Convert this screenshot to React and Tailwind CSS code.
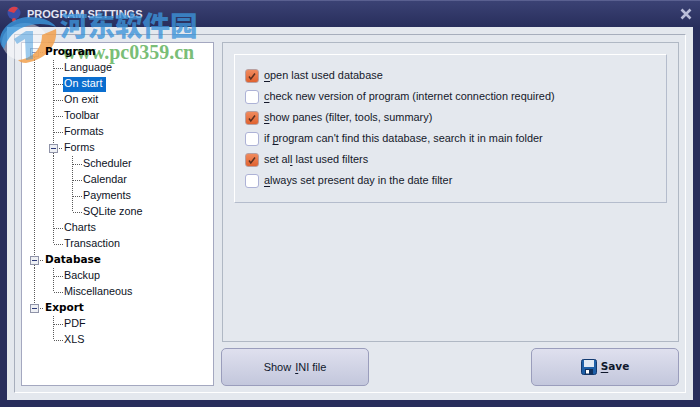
const uiFont = { fontFamily: '"Liberation Sans", "Noto Sans", sans-serif' };

function Cell({ kind }) {
  const dots = "#5a5a5a";
  return (
    <svg width="19" height="16" className="shrink-0" shapeRendering="crispEdges">
      {(kind === "v" || kind === "tee") && <line x1="9.5" y1="0" x2="9.5" y2="16" stroke={dots} strokeDasharray="1 1" />}
      {kind === "corner" && <line x1="9.5" y1="0" x2="9.5" y2="8" stroke={dots} strokeDasharray="1 1" />}
      {(kind === "tee" || kind === "corner") && <line x1="10" y1="8.5" x2="19" y2="8.5" stroke={dots} strokeDasharray="1 1" />}
      {kind === "boxDown" && <line x1="9.5" y1="13" x2="9.5" y2="16" stroke={dots} strokeDasharray="1 1" />}
      {kind === "boxBoth" && <><line x1="9.5" y1="0" x2="9.5" y2="4" stroke={dots} strokeDasharray="1 1" /><line x1="9.5" y1="13" x2="9.5" y2="16" stroke={dots} strokeDasharray="1 1" /></>}
      {kind === "boxUp" && <line x1="9.5" y1="0" x2="9.5" y2="4" stroke={dots} strokeDasharray="1 1" />}
      {kind.startsWith("box") && (
        <>
          <line x1="15" y1="8.5" x2="19" y2="8.5" stroke={dots} strokeDasharray="1 1" />
          <rect x="5.5" y="4.5" width="8" height="8" fill="#eef0f4" stroke="#8f93a8" />
          <line x1="7" y1="8.5" x2="12" y2="8.5" stroke="#2d3a78" />
        </>
      )}
    </svg>
  );
}

function TreeRow({ cells, label, bold, selected }) {
  return (
    <div className="flex h-4 items-center">
      {cells.map((c, i) => <Cell key={i} kind={c} />)}
      <span className={`relative z-10 h-[15px] whitespace-nowrap px-px leading-[12px] ${bold ? "font-bold text-black" : "text-[10.8px] text-[#0c1224]"} ${selected ? "bg-[#0a6ecf] pr-[4px] text-white" : ""}`} style={bold ? { fontFamily: '"DejaVu Sans", sans-serif', fontSize: 10.5 } : undefined}>
        {label}
      </span>
    </div>
  );
}

const rows = [
  { cells: ["boxDown"], label: "Program", bold: true },
  { cells: ["v", "tee"], label: "Language" },
  { cells: ["v", "tee"], label: "On start", selected: true },
  { cells: ["v", "tee"], label: "On exit" },
  { cells: ["v", "tee"], label: "Toolbar" },
  { cells: ["v", "tee"], label: "Formats" },
  { cells: ["v", "boxBoth"], label: "Forms" },
  { cells: ["v", "v", "tee"], label: "Scheduler" },
  { cells: ["v", "v", "tee"], label: "Calendar" },
  { cells: ["v", "v", "tee"], label: "Payments" },
  { cells: ["v", "v", "corner"], label: "SQLite zone" },
  { cells: ["v", "tee"], label: "Charts" },
  { cells: ["v", "corner"], label: "Transaction" },
  { cells: ["boxBoth"], label: "Database", bold: true },
  { cells: ["v", "tee"], label: "Backup" },
  { cells: ["v", "corner"], label: "Miscellaneous" },
  { cells: ["boxUp"], label: "Export", bold: true },
  { cells: ["blank", "tee"], label: "PDF" },
  { cells: ["blank", "corner"], label: "XLS" },
];

function Check({ checked, label }) {
  return (
    <div className="flex h-[21px] items-center gap-[5px]">
      <span className={`flex h-[14px] w-[14px] items-center justify-center rounded-[3px] border ${checked ? "border-[#b9a0a0] bg-gradient-to-b from-[#f08a5c] to-[#e0622f]" : "border-[#adb2d6] bg-white"}`}>
        {checked && (
          <svg width="10" height="10" viewBox="0 0 10 10">
            <path d="M2 5.5 L3.8 8 L8 2.5" fill="none" stroke="#5c3020" strokeWidth="1.5" />
          </svg>
        )}
      </span>
      <span className="whitespace-nowrap text-[10.9px] text-[#14182a]">{label}</span>
    </div>
  );
}

const U = ({ children }) => <span className="underline underline-offset-2">{children}</span>;

function Btn({ children }) {
  return (
    <button className="flex h-[38px] w-[148px] items-center justify-center rounded-[5px] border border-[#9a9dbc] bg-gradient-to-b from-[#dfe0ee] to-[#c3c7dc] text-[11px] text-[#10182c]">
      {children}
    </button>
  );
}

export default function App() {
  return (
    <div className="relative flex h-[407px] w-[700px] flex-col overflow-hidden bg-[#282e5c]" style={uiFont}>
      <div className="flex h-[28px] items-center justify-between border-t border-[#5a6090] bg-gradient-to-b from-[#3b4274] to-[#282e5c] pl-[6px] pr-[8px]">
        <div className="flex items-center gap-[4px]">
          <svg width="17" height="17" viewBox="0 0 17 17">
            <circle cx="8" cy="7" r="6.5" fill="#3a4fa8" />
            <path d="M2 5 A6.5 6.5 0 0 1 12 2 L8 7 Z" fill="#d8404a" />
            <circle cx="8" cy="14" r="2" fill="#d8404a" />
          </svg>
          <span className="whitespace-nowrap text-[11px] font-bold text-[#e4e6f4]">PROGRAM SETTINGS</span>
        </div>
        <svg width="12" height="12" viewBox="0 0 12 12">
          <path d="M1.5 1.5 L10.5 10.5 M10.5 1.5 L1.5 10.5" stroke="#b9bdd8" strokeWidth="2.6" />
        </svg>
      </div>

      <div className="mx-[7px] mb-[7px] flex-1 bg-[#e4e8ee] p-[7px]">
        <div className="flex h-full flex-col justify-between border border-b-white border-l-[#a7aebc] border-r-white border-t-[#a7aebc] pb-[6px] pl-[6px] pr-[5px] pt-[7px]">
          <div className="flex h-full gap-[7px]">
            <div className="h-[344px] w-[193px] border border-[#a4a8c0] bg-white pl-[3px] pt-[1px]">
              {rows.map((r) => <TreeRow key={r.label} {...r} />)}
            </div>
            <div className="flex w-[458px] flex-col justify-between">
              <div className="ml-px h-[300px] border border-[#b0b8c4] p-[11px]">
                <div className="h-[149px] border border-b-[#b4bccc] border-l-white border-r-[#b4bccc] border-t-white pl-[10px] pt-[10px]">
                  <Check checked label={<><U>o</U>pen last used database</>} />
                  <Check label={<><U>c</U>heck new version of program (internet connection required)</>} />
                  <Check checked label={<><U>s</U>how panes (filter, tools, summary)</>} />
                  <Check label={<>if <U>p</U>rogram can't find this database, search it in main folder</>} />
                  <Check checked label={<>set al<U>l</U> last used filters</>} />
                  <Check label={<><U>a</U>lways set present day in the date filter</>} />
                </div>
              </div>
              <div className="flex justify-between">
                <Btn>Show <span className="ml-1 underline underline-offset-2">I</span>NI file</Btn>
                <Btn>
                  <svg width="16" height="16" viewBox="0 0 16 16" className="mr-[4px]">
                    <rect x="0.5" y="0.5" width="15" height="15" rx="2" fill="#1d5fa8" stroke="#123a70" />
                    <rect x="3" y="1" width="10" height="7" fill="#dfe8f4" />
                    <rect x="4" y="10" width="8" height="5.5" fill="#10305c" />
                    <rect x="5" y="11" width="3" height="3.5" fill="#ffffff" />
                  </svg>
                  <span className="font-bold" style={{ fontFamily: '"DejaVu Sans", sans-serif', fontSize: 10.5 }}><U>S</U>ave</span>
                </Btn>
              </div>
            </div>
          </div>
        </div>
      </div>

      {/* watermark over the window */}
      <svg width="60" height="52" viewBox="0 0 60 52" className="pointer-events-none absolute left-0 top-[15px]">
        <ellipse cx="25" cy="27" rx="23" ry="19" fill="#ffffff" fillOpacity="0.45" />
        <path d="M0 24 C2 10 16 2 30 2 C42 2 52 6 56 12 C46 8 34 8 24 12 C14 16 8 22 4 34 C1 31 0 28 0 24 Z" fill="#3a96dc" fillOpacity="0.8" />
        <path d="M56 14 C58 28 48 44 26 48 C22 48 20 47 18 45 C32 44 42 34 42 20 C46 18 52 16 56 14 Z" fill="#f2a04c" fillOpacity="0.85" />
        <path d="M14 24 L26 16 L33 16 L33 44 L26 45 L25 24 L17 29 Z" fill="#3a96dc" fillOpacity="0.5" />
      </svg>
      <div className="pointer-events-none absolute left-[60px] top-[6px] whitespace-nowrap text-[27.5px] font-black leading-[36px] text-[#3d94da]/80" style={{ fontFamily: '"Noto Sans CJK SC", sans-serif' }}>河东软件园</div>
      <div className="pointer-events-none absolute left-[62px] top-[41px] whitespace-nowrap text-[20px] font-bold leading-[22px] text-[#55ac52]/80" style={{ fontFamily: '"Liberation Serif", serif' }}>www.pc0359.cn</div>
    </div>
  );
}
